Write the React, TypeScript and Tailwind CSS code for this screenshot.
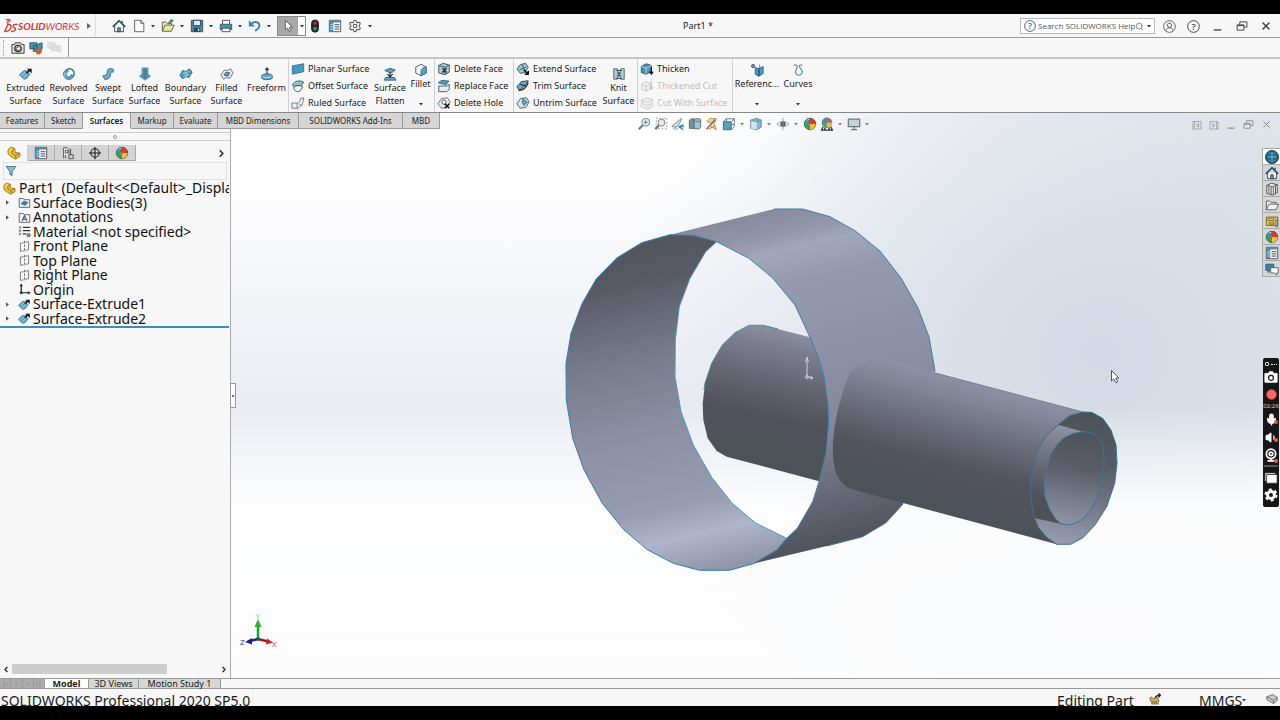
import React from 'react';
import { ChevronLeft, ChevronRight, Mic, Search, Settings, Volume1, Webcam, X } from 'lucide-react';

interface IconProps {
  className?: string;
  children?: React.ReactNode;
}

const Svg: React.FC<IconProps> = ({ className = 'w-[14px] h-[14px]', children }) => (
  <svg viewBox="0 0 16 16" className={`${className} shrink-0`} fill="none" stroke="#3d4a54" strokeWidth="1" strokeLinejoin="round" aria-hidden="true">
    {children}
  </svg>
);

const Caret: React.FC<{ className?: string }> = ({ className = '' }) => (
  <svg viewBox="0 0 4 3" className={`w-1 h-[3px] shrink-0 ${className}`} aria-hidden="true">
    <path d="M0 0h4L2 2.6z" fill="#333" />
  </svg>
);

const HelpMark: React.FC<{ className: string; ring: string }> = ({ className, ring }) => (
  <svg viewBox="0 0 16 16" className={`${className} shrink-0`} aria-hidden="true">
    <circle cx="8" cy="8" r="7.2" fill="#fafafa" stroke={ring} strokeWidth="1.2" />
    <text x="8" y="12" textAnchor="middle" fontSize="11.5" fontWeight="600" fill={ring} fontFamily="Open Sans, sans-serif">?</text>
  </svg>
);

const icons: Record<string, React.ReactNode> = {
  extruded: (
    <>
      <path d="M.5 9 5 4.500l3-.5 4.500 4-3.500 5-3 1-2-1.500z" fill="#5fa3c4" stroke="#4a7f99" />
      <path d="M3 10 7 5.500M5.500 12 10 7.500" stroke="#b5dbea" />
      <path d="m8.500 7 4-4" stroke="#1a1a1a" strokeWidth="2" />
      <path d="M9 2h5.500v5.500z" fill="#1a1a1a" stroke="none" />
    </>
  ),
  revolved: (
    <>
      <path d="M6 2.500A6 6 0 1 0 13.500 10l-3-1.200A3 3 0 1 1 7 5.500z" fill="#5fa3c4" stroke="#31708f" />
      <path d="M6 2.500c5-2 9 2 7.500 7.500" stroke="#31708f" strokeWidth="1.600" />
      <path d="M4 6 2.500 9.500 5 12.500" stroke="#b4dbeb" />
    </>
  ),
  swept: (
    <path d="M14 2.500c-3-2-7-.5-7 3 0 3-1 4-5 4.500l2.500 4.500C9 14 11 11.500 11 8c0-2 1-2.500 3-2z" fill="#6aa9c8" stroke="#31708f" />
  ),
  lofted: (
    <>
      <path d="M4.500 1h7v7l3 2.500L8 15l-6.500-4.500L4.500 8z" fill="#4e8fae" stroke="#78aac0" />
      <path d="M8 1.500V14" stroke="#3a7390" />
    </>
  ),
  boundary: (
    <>
      <path d="M1 9.500 4 4l4 1 4-3 3 4-3.500 6-3.500-1-4 2.500z" fill="#4e92b6" stroke="#31708f" />
      <path d="m4 8 8-3M5 11l7-3M7 5l2 6" stroke="#b4dbeb" />
    </>
  ),
  filled: (
    <>
      <path d="M1 9 5 3.500 9 4l3-2 3 5-4 6-4-1-3 2z" fill="#e9eef0" stroke="#5d6870" />
      <path d="m4.500 9 2.500-3 4 .5-2 4z" fill="#5fa3c4" stroke="#3d4a54" />
    </>
  ),
  freeform: (
    <>
      <path d="M2 10c1-3 11-3 12 0v3c-2 2-10 2-12 0z" fill="#5fa3c4" stroke="#31708f" />
      <path d="M8 1v7M6 3.500 8 1l2 2.500" stroke="#333" strokeWidth="1.300" />
      <path d="M3 11c2 1.500 8 1.500 10 0" stroke="#d5ecf5" />
    </>
  ),
  planar: <path d="M1.500 4.500 14.500 2v9L1.500 14z" fill="#4a97bf" stroke="#2f6f92" />,
  offset: (
    <>
      <path d="M1.500 7c2-5 9-6 13-3.500L11 8.500C8 7 5 7 4 9z" fill="#8cc3d8" stroke="#3d4a54" />
      <path d="M3 10c2-3 7-3 10.500-1L10 14c-3 1-6 0-7-4z" fill="#f5f5f5" stroke="#3d4a54" />
    </>
  ),
  ruled: (
    <>
      <path d="M1 8h6v6H1zM7 14c4-1 7-4 7.500-12l-4 1c0 4-1 5-3.500 5" fill="#edf0f1" stroke="#6a757c" />
      <path d="M9.500 9.500 13 11" stroke="#6a757c" />
    </>
  ),
  flatten: (
    <>
      <path d="M2 4 8 1.500l6 2L9 7z" fill="#5fa3c4" stroke="#2c5f7a" />
      <path d="M3 12h10l2 3H1z" fill="#5fa3c4" stroke="#2c5f7a" />
      <path d="M8 6v5M5 8l3 3.500L11 8" stroke="#222" strokeWidth="1.300" />
    </>
  ),
  fillet: (
    <>
      <path d="M2 4.500 8 1.500l6 3v7L8 14.500l-6-3z" fill="#f3f5f6" stroke="#4a545b" />
      <path d="M8 14.500V9.500c0-2.500 2-4.500 6-5v7z" fill="#5fa3c4" stroke="#31708f" />
    </>
  ),
  deleteFace: (
    <>
      <path d="M2 4 7 1.500l7 2v8l-5 3-7-2z" fill="#a7ccdc" stroke="#3d4a54" />
      <path d="M2 4l7 2 5-2.500M9 6v8.500" />
      <path d="m6 7 5 5m0-5-5 5" stroke="#222" strokeWidth="1.400" />
    </>
  ),
  replaceFace: (
    <>
      <path d="M1.500 4.500c3-4 7-3 12-2l-3 4c-3-1-5-1-9-2z" fill="#4e9ebf" stroke="#2c5f7a" />
      <path d="M2 8h10l2-2v6l-3 2.500H2z" fill="#e8edf0" stroke="#3d4a54" />
    </>
  ),
  deleteHole: (
    <>
      <path d="M1 9 5 3l7-1 3 5-4 6-6 1z" fill="#e8edf0" stroke="#5d6870" />
      <circle cx="8" cy="7" r="2.500" fill="#fff" />
      <path d="m9 9 5 5m0-5-5 5" stroke="#111" strokeWidth="1.700" />
    </>
  ),
  extend: (
    <>
      <path d="M1 8 5 3l6-1.500L14 6l-4 6-5 1z" fill="#9cc5d6" stroke="#3d4a54" />
      <path d="m4 9 7-3M7 3l3 7" />
      <path d="m9 9 5 5m0-4v4h-4" stroke="#111" strokeWidth="1.700" />
    </>
  ),
  trim: (
    <>
      <path d="M1 9 6 3l8-1-3 5-7 6z" fill="#6aa9c8" stroke="#253640" />
      <path d="M3 13c5 0 9-3 11-9M5 6l6 2" stroke="#222" strokeWidth="1.300" />
    </>
  ),
  untrim: (
    <>
      <path d="M1 9 5 3l7-1 3 5-4 6-6 1z" fill="#d8e6ec" stroke="#46545d" />
      <path d="m8 3 5 4-4 4-2-4z" fill="#5fa3c4" stroke="#31708f" />
    </>
  ),
  knit: (
    <>
      <path d="M2 2h4l1.500 6L6 14H2zM14 2h-4L8.500 8l1.500 6h4z" fill="#a7ccdc" stroke="#4a6472" />
      <path d="M5 4h6M6 7h4M6 10h4M5 13h6" stroke="#333" />
    </>
  ),
  thicken: (
    <>
      <path d="M1.500 5 7 2l6 2v7l-6 3-5.500-2z" fill="#4e92b6" stroke="#26536b" />
      <path d="M1.500 5 7 7l6-3M7 7v7" stroke="#bfe0ec" />
      <path d="M13 6v7m-2-2 2 3 2-3" stroke="#111" strokeWidth="1.400" />
    </>
  ),
  thickenedCut: (
    <>
      <path d="M2 6 7 3l5 2v6l-5 3-5-2zM2 6l5 2 5-3M7 8v6" fill="#eee" stroke="#c5c5c5" />
      <path d="M13 2v10m-2-3 2 3 2-3" stroke="#bbb" />
    </>
  ),
  cutWith: (
    <path d="m1.500 5 6-3 7 2-6 3zM1.500 5v3l7 3 6-3V4M1.500 9v3l7 3 6-3V9" fill="#eee" stroke="#c5c5c5" />
  ),
  reference: (
    <>
      <path d="M6 5l4 1.500V15l-4-2zM10 6.500 15 4v8l-5 3z" fill="#4e9ebf" stroke="#2c5f7a" />
      <circle cx="3.500" cy="3.500" r="1.800" fill="#5fa3c4" />
      <path d="M11 2v13" strokeDasharray="2 1" />
    </>
  ),
  curves: <path d="M3 2.500c5-1 5 2 3 5s0 7 3.500 6.500S14 10 11 6.500 9.500 2 13 2.500" stroke="#4a87a0" strokeWidth="1.200" />,
  home: (
    <>
      <path d="M3 8v6.500h10V8" fill="#fff" stroke="#333" />
      <path d="M1 9 8 2l7 7" stroke="#22536b" strokeWidth="2" />
      <path d="M6.500 14.500V10h3v4.500z" fill="#4e92b6" />
      <path d="M11.500 5V2" strokeWidth="1.500" />
    </>
  ),
  newDoc: <path d="M3 1.500h7L13.500 5v9.500H3zM10 1.500V5h3.500" fill="#fff" stroke="#555" />,
  open: (
    <>
      <path d="M1.500 14V3.500h4L7 5h5v2" fill="#f5edb8" stroke="#555" />
      <path d="m1.500 14 3-7H15l-3 7z" fill="#e9e8a4" stroke="#555" />
      <path d="M9 6c0-3 1-4 4-4m-2-1.500L13.500 2 11 4" stroke="#2f8f3f" strokeWidth="1.500" />
    </>
  ),
  save: (
    <>
      <path d="M1.500 1.500h13v13h-13z" fill="#4d86a3" stroke="#2a4654" />
      <path d="M4 1.500h8v6H4z" fill="#dceef4" stroke="#2a4654" />
      <path d="M4.500 10h7v4.500h-7z" fill="#2a4654" stroke="none" />
      <path d="M9 11h1.500v2.500H9z" fill="#fff" stroke="none" />
    </>
  ),
  print: (
    <>
      <path d="M4 6V1.500h8V6" fill="#fff" stroke="#444" />
      <path d="M1.500 6h13v6h-13z" fill="#4d92b5" stroke="#2a5266" />
      <path d="M3.500 10.500h9v4h-9z" fill="#fff" stroke="#444" />
    </>
  ),
  undo: (
    <>
      <path d="M3.500 5.500C8 2 13 3.500 13 7.500c0 3-2 4.500-5 6" stroke="#3e86ab" strokeWidth="2.200" />
      <path d="M1 1.500v7h7z" fill="#3e86ab" stroke="none" />
    </>
  ),
  pointer: <path d="M5 1.500v11l2.500-2.300 2 4 2-1-2-3.800H13z" fill="#fff" stroke="#555" />,
  traffic: (
    <>
      <rect x="4" y="1" width="8" height="14" rx="4" fill="#222" stroke="#222" />
      <circle cx="8" cy="4.800" r="2" fill="#c03030" stroke="none" />
      <circle cx="8" cy="11" r="2.200" fill="#2c9c46" stroke="none" />
    </>
  ),
  options: (
    <>
      <path d="M1.500 1.500h13v13h-13z" fill="#fff" stroke="#3b4c56" />
      <path d="M2 2h12v2H2zM2 2h4v12H2z" fill="#4d8dad" stroke="none" />
      <path d="M3 6.500h2M3 9h2M3 11.500h2" stroke="#fff" />
      <path d="M7.500 6.500H13M7.500 9H13M7.500 11.500H13" stroke="#333" />
    </>
  ),
  snap: (
    <>
      <path d="M1 4h3l1-2h6l1 2h3v10H1z" fill="#ddd" stroke="#333" />
      <circle cx="8" cy="8.500" r="3.600" fill="#fff" stroke="#333" strokeWidth="1.500" />
      <path d="M9.500 7.500a2 2 0 1 0 0 2.500" stroke="#333" />
    </>
  ),
  record: (
    <>
      <path d="M1 2h8v7H1zM5 5h9v7H5z" fill="#4d92b5" stroke="#29566d" />
      <path d="m9 4 6-2v7" fill="#4d92b5" stroke="#29566d" />
      <circle cx="11" cy="12" r="3.300" fill="#d9592a" stroke="none" />
    </>
  ),
  recordOff: <path d="M1 2h8v6H1zM5 5h7v6H5zM12 7l3-2v8l-3-2" fill="#e6e6e6" stroke="#d0d0d0" />,
  part: (
    <>
      <path d="M1 6.500C1 3.500 3 1.500 5.500 1.500L9 3v4.500l5.500.5.500 3.500-5 3.500L4.500 12C2.500 11 1 9 1 6.500z" fill="#f0c33c" stroke="#8a6d1a" />
      <path d="M9 3 6 5v4l4 2 4.800-3M10 11v3.500" stroke="#8a6d1a" />
      <path d="M3 6c.5-1.500 1.500-2.500 3-2.500" stroke="#fff1b8" />
    </>
  ),
  config: (
    <>
      <path d="M3 14V2h4l2 2v5" fill="#f3f3f3" stroke="#444" />
      <path d="M5 5h3v3H5zM9 10h5v4.500H9zM11 3v7M5 10v4" stroke="#444" />
    </>
  ),
  dimx: (
    <>
      <circle cx="8" cy="8" r="4.800" stroke="#222" strokeWidth="1.300" />
      <path d="M8 1v14M1 8h14" stroke="#222" strokeWidth="1.300" />
    </>
  ),
  appearance: (
    <>
      <circle cx="8" cy="8" r="6.500" fill="#ddd" stroke="#333" />
      <path d="M8 8 2 5.500A6.500 6.500 0 0 1 8 1.500z" fill="#2f7dc4" stroke="none" />
      <path d="M8 8V1.500A6.500 6.500 0 0 1 14.500 8z" fill="#d83a30" stroke="none" />
      <path d="M8 8h6.500A6.500 6.500 0 0 1 8 14.500z" fill="#e9c63b" stroke="none" />
      <path d="M8 8v6.500A6.500 6.500 0 0 1 2 5.500z" fill="#3d9c55" stroke="none" />
      <path d="M4 4.500a5 5 0 0 1 3-1.800" stroke="#fff" />
    </>
  ),
  bodies: (
    <>
      <path d="M1.500 14V3h5l1 1.500h7V14z" fill="#e3eef3" stroke="#555" />
      <path d="m4 9.500 3-3 5 1.500-3 3.500z" fill="#3d86aa" stroke="#2c5f7a" />
    </>
  ),
  annotations: (
    <>
      <path d="M1.500 14V3h5l1 1.500h7V14z" fill="#eef2f4" stroke="#555" />
      <path d="M5 12.500 8 5.500l3 7M6 10h4" stroke="#456" strokeWidth="1.300" />
    </>
  ),
  material: (
    <>
      <path d="M6 3h9M6 7h9M6 11h4" stroke="#333" strokeWidth="1.500" />
      <path d="M1.500 2h2v2h-2zM1.500 6h2v2h-2zM1.500 10h2v2h-2z" fill="#c9b45c" stroke="#888" />
      <circle cx="13" cy="12.500" r="2" fill="#999" />
    </>
  ),
  plane: (
    <>
      <path d="M3 4 13 2v10L3 14z" fill="#f7f7f7" stroke="#666" />
      <path d="M8 1.500v13" stroke="#f7f7f7" strokeWidth="2" />
      <path d="M8 1v14" stroke="#555" strokeDasharray="3 1.500" />
    </>
  ),
  origin: (
    <>
      <path d="M4 2.500V12h10" stroke="#222" strokeWidth="1.500" />
      <path d="M4 .5 2 4h4zM15.500 12 12 10v4z" fill="#222" stroke="none" />
      <circle cx="4" cy="12" r="1.500" fill="#222" />
    </>
  ),
  filter: <path d="M1.500 2h13L9.500 8.500V14l-3-1.500v-4z" fill="#8bc0d6" stroke="#2d5c72" />,
  zoomFit: (
    <>
      <circle cx="10" cy="6" r="4.500" fill="#dcebf3" stroke="#6b777f" />
      <path d="M6.500 9.500 2 14" stroke="#6b777f" strokeWidth="2.400" />
      <path d="M8 6h4M10 4v4" stroke="#2f7db0" />
    </>
  ),
  zoomArea: (
    <>
      <path d="M2.500 1.500h12v12h-12z" strokeDasharray="2 2" stroke="#889" />
      <circle cx="8.500" cy="6.500" r="4" fill="#dcebf3" stroke="#6b777f" />
      <path d="m5.500 9.500-4 4.500" stroke="#6b777f" strokeWidth="2.400" />
    </>
  ),
  prevView: (
    <>
      <path d="M1 10.500 12 1.500l-1 4-5 6.500z" fill="#d5dce0" stroke="#7a868d" />
      <path d="M2 12c2 2.500 4 2.500 6 1" stroke="#7a868d" />
      <path d="M14.500 8.500 9 11l5 3.500M9 11h6" stroke="#3384b5" strokeWidth="1.400" />
    </>
  ),
  section: (
    <>
      <path d="M1.500 4 4 2h3v11H1.500z" fill="#7f8d96" stroke="#5a686f" />
      <path d="M7 3c2-2 7-1 7.500 0v9c-1 2-5 2-7.500 1z" fill="#9dc4d6" stroke="#5a686f" />
      <path d="M7 4c2 1.500 5 1.500 7.500 0" stroke="#5a686f" />
    </>
  ),
  sketchView: (
    <>
      <path d="m2 5 4-3.500 7 .5-2 4-5 1z" fill="#f0d08c" stroke="#b58b3c" />
      <path d="M1.500 14 12 3" stroke="#778" strokeWidth="2" />
      <path d="m5 9 8 5.500M10 7l3 7.500M4 14l7-4" stroke="#d4902c" strokeWidth="1.300" />
    </>
  ),
  orient: (
    <>
      <path d="M1.500 5.500h9v9h-9z" fill="#5b9fc0" stroke="#33617a" />
      <path d="M1.500 5.500 5 2h9v9l-3.500 3.500M10.500 5.500 14 2M5 2v3.500M10.500 8.500H14" stroke="#4f6f80" />
    </>
  ),
  display: (
    <>
      <path d="m2 3.500 7-2 5 2v8l-5 3-7-1.500z" fill="#7fb6d0" stroke="#6b8795" />
      <path d="M2.500 4v9L9 14V5.500z" fill="#cfe4ee" stroke="none" />
      <path d="m2 3.500 7 2 5-2" stroke="#6b8795" />
    </>
  ),
  eye: (
    <>
      <path d="M1 8c4-4 10-4 14 0-4 4-10 4-14 0z" fill="#eee" stroke="#999" />
      <circle cx="8" cy="8" r="3" fill="#555" stroke="none" />
      <path d="M8 1v14" stroke="#999" />
    </>
  ),
  scene: (
    <>
      <circle cx="8" cy="6.500" r="5.500" fill="#d95a48" stroke="#777" />
      <path d="M8 6.500V1a5.500 5.500 0 0 0-5.500 5.500z" fill="#3f8fca" stroke="none" />
      <path d="M8 6.500v5.500a5.500 5.500 0 0 1-5.500-5.500z" fill="#52a75e" stroke="none" />
      <path d="M8 6.500h5.500A5.500 5.500 0 0 1 8 12z" fill="#e5c54a" stroke="none" />
      <path d="M2 15 3.500 11M14 15l-1.500-4M1 15h14M5.500 15V12M10.500 15V12" stroke="#333" strokeWidth="1.600" />
    </>
  ),
  monitor: (
    <>
      <path d="M1.500 2.500h13v8.500h-13z" fill="#cbd2d6" stroke="#6b777f" strokeWidth="1.400" />
      <path d="M8 11v3M4.500 14.300h7" stroke="#6b777f" strokeWidth="1.400" />
    </>
  ),
  paneLeft: <path d="M1.500 2.500h13v12h-13zM4 2.500v12M10.500 5.500v6L7 8.500z" stroke="#888" />,
  paneRight: <path d="M1.500 2.500h13v12h-13zM12 2.500v12M6 5.500v6l3.500-3z" stroke="#888" />,
  minimize: <path d="M2.500 13h11" stroke="currentColor" strokeWidth="1.800" />,
  restore: <path d="M1.500 6.500h9v7h-9zM5 6V2.500h9.500v7H11M1.500 7.500h9" stroke="currentColor" strokeWidth="1.200" />,
  globe: (
    <>
      <circle cx="8" cy="8" r="7.500" fill="#1f6389" stroke="#173f55" />
      <path d="M3 8h10M8 3v10" stroke="#8fc5dc" />
      <path d="M4 4.500c2-2 6-2 8 0M4 11.500c2 2 6 2 8 0" stroke="#5f9dba" />
    </>
  ),
  library: (
    <>
      <path d="M2 4 7 1.500 14 3v9l-5 3-7-2z" fill="#eee" stroke="#444" />
      <path d="M4.500 5v8M7 6v8.500M9.500 6v8M12 5v8M2 4l7 1.500L14 3" stroke="#444" />
    </>
  ),
  folder: (
    <path d="M1.500 13.500v-10h4L7 5h5.500v2M1.500 13.500 4.500 7h11l-3 6.500z" fill="#f1f1f1" stroke="#555" />
  ),
  palette: (
    <>
      <path d="M1.500 3.500h13v9.500h-13z" fill="#e8c651" stroke="#6e5713" />
      <path d="M3.500 5.500h7v2h-7zM5 10h5v1.500H5z" fill="#fff" stroke="#6e5713" />
      <path d="M12.500 7v7.500h2V7z" fill="#ddd" stroke="#555" />
    </>
  ),
  forum: (
    <>
      <path d="M1 2.500h9v7H6L3.500 12V9.500H1z" fill="#3683ab" stroke="#235a78" />
      <path d="M6.500 6.500H15v6h-1.500V15L11 12.500H6.500z" fill="#fff" stroke="#555" />
    </>
  ),
  rebuild: (
    <>
      <path d="m1 7 2-2 3 3 4-3 3 4v3H3z" fill="#dba945" stroke="#65531f" />
      <path d="M3 14.500h10M4 12v2M7 12v2M10 12v2" stroke="#555" strokeWidth="1.300" />
      <path d="M8 7c1-4 3-4 5-4m0-2.500V6L16 3z" fill="#111" stroke="#111" />
    </>
  ),
  tag: (
    <>
      <path d="m1 5 8-3 6 4v4l-5 4-9-5z" fill="#c9cccf" stroke="#555" />
      <path d="m1 5 9 5 5-4M10 10v4" stroke="#555" />
    </>
  ),
};

const Icon: React.FC<{ name: string; className?: string }> = ({ name, className }) => <Svg className={className}>{icons[name]}</Svg>;

interface BigToolProps {
  icon: string;
  label: string;
  width: string;
  menu?: boolean;
}

const BigTool: React.FC<BigToolProps> = ({ icon, label, width, menu }) => (
  <button className={`${width} ${menu ? 'pt-1' : 'pt-2'} h-full shrink-0 flex flex-col items-center text-[9px] leading-[13px]`}>
    <Icon name={icon} />
    <span className="whitespace-pre">{label}</span>
    {menu && <Caret className="mt-auto mb-[6px]" />}
  </button>
);

interface SmallTool {
  icon: string;
  label: string;
  disabled?: boolean;
}

const ToolColumn: React.FC<{ tools: SmallTool[]; width: string }> = ({ tools, width }) => (
  <div className={`${width} shrink-0 h-full pt-[1px] flex flex-col border-l border-[#d0d0d0] pl-[2px]`}>
    {tools.map(t => (
      <button key={t.label} disabled={t.disabled} className={`flex items-center gap-[3px] h-[17px] text-[9px] whitespace-nowrap ${t.disabled ? 'text-[#bdbdbd]' : ''}`}>
        <Icon name={t.icon} /> {t.label}
      </button>
    ))}
  </div>
);

const createTools: BigToolProps[] = [
  { icon: 'extruded', label: 'Extruded\nSurface', width: 'w-[43px]' },
  { icon: 'revolved', label: 'Revolved\nSurface', width: 'w-[43px]' },
  { icon: 'swept', label: 'Swept\nSurface', width: 'w-[36px]' },
  { icon: 'lofted', label: 'Lofted\nSurface', width: 'w-[37px]' },
  { icon: 'boundary', label: 'Boundary\nSurface', width: 'w-[45px]' },
  { icon: 'filled', label: 'Filled\nSurface', width: 'w-[37px]' },
  { icon: 'freeform', label: 'Freeform', width: 'w-[43px]' },
];

const commandTabs = [
  { label: 'Features', width: 'w-[45px]' },
  { label: 'Sketch', width: 'w-[38px]' },
  { label: 'Surfaces', width: 'w-[48px]' },
  { label: 'Markup', width: 'w-[43px]' },
  { label: 'Evaluate', width: 'w-[44px]' },
  { label: 'MBD Dimensions', width: 'w-[81px]' },
  { label: 'SOLIDWORKS Add-Ins', width: 'w-[104px]' },
  { label: 'MBD', width: 'w-[37px]' },
];

const treeItems = [
  { icon: 'bodies', label: 'Surface Bodies(3)', expandable: true },
  { icon: 'annotations', label: 'Annotations', expandable: true },
  { icon: 'material', label: 'Material <not specified>' },
  { icon: 'plane', label: 'Front Plane' },
  { icon: 'plane', label: 'Top Plane' },
  { icon: 'plane', label: 'Right Plane' },
  { icon: 'origin', label: 'Origin' },
  { icon: 'extruded', label: 'Surface-Extrude1', expandable: true },
  { icon: 'extruded', label: 'Surface-Extrude2', expandable: true },
];

const quickTools = [
  { icon: 'home', label: 'Home', menu: false },
  { icon: 'newDoc', label: 'New', menu: true },
  { icon: 'open', label: 'Open', menu: true },
  { icon: 'save', label: 'Save', menu: true },
  { icon: 'print', label: 'Print', menu: true },
  { icon: 'undo', label: 'Undo', menu: true },
];

const TitleBar = () => (
  <header className="h-[23px] shrink-0 flex items-center border-b border-[#999] relative">
    <div className="w-[96px] h-full shrink-0 flex items-center border-r border-[#ddd] pl-[3px]">
      <svg viewBox="0 0 15 16" className="w-[15px] h-4 shrink-0" fill="none" stroke="#d6332c" strokeWidth="1.3" aria-label="DS">
        <path d="M3 2c2-.8 4.500-.6 4 .4S5 4 3.500 4.500M1.500 13.500 5 6.500M1.500 13.500c4 .3 6.500-2 6.500-4.500 0-2-1.500-3-4-3M14.500 6.500c-2.500-.4-4.500.2-4.500 1.700s3 1.300 2.600 3-2 2.300-4.600 2.300" />
      </svg>
      <span className="text-[10px] italic text-[#d6332c] font-['Lato','Noto_Sans',sans-serif]"><b>SOLID</b>WORKS</span>
      <svg viewBox="0 0 4 6" className="w-1 h-[6px] ml-auto mr-1" aria-hidden="true"><path d="M0 0v6l4-3z" fill="#666" /></svg>
    </div>
    <nav className="flex items-center h-full pl-4" aria-label="Quick access">
      {quickTools.map(t => (
        <button key={t.label} aria-label={t.label} className={`${t.menu ? 'w-[29px]' : 'w-5'} flex items-center justify-between pr-[6px]`}>
          <Icon name={t.icon} />
          {t.menu && <Caret />}
        </button>
      ))}
      <button aria-label="Select" className="w-[29px] h-5 flex items-center border border-[#888] bg-white">
        <span className="w-5 h-full flex items-center justify-center bg-[#a8a8a8]"><Icon name="pointer" /></span>
        <Caret className="ml-[2px]" />
      </button>
      <button aria-label="Rebuild" className="ml-[2px]"><Icon name="traffic" /></button>
      <button aria-label="File properties" className="ml-[6px]"><Icon name="options" /></button>
      <button aria-label="Options" className="ml-[6px] flex items-center gap-[6px] text-[#555]">
        <Settings className="w-[14px] h-[14px]" strokeWidth={1.8} />
        <Caret />
      </button>
    </nav>
    <h1 className="absolute left-1/2 ml-[43px] text-[9px]">Part1 *</h1>
    <div className="ml-auto flex items-center text-[#333]">
      <div className="w-[135px] h-4 flex items-center bg-white border border-[#bbb] px-[3px]">
        <HelpMark className="w-3 h-3" ring="#3b5f73" />
        <input
          aria-label="Search SOLIDWORKS Help"
          placeholder="Search SOLIDWORKS Help"
          className="flex-1 min-w-0 ml-[2px] text-[8px] font-['Open_Sans',sans-serif] outline-none placeholder:text-[#555]"
        />
        <Search className="w-[9px] h-[9px] shrink-0 text-[#666]" />
        <Caret className="ml-[3px]" />
      </div>
      <button aria-label="Account" className="ml-2">
        <Svg className="w-[13px] h-[13px]">
          <circle cx="8" cy="8" r="7.200" stroke="#444" /><circle cx="8" cy="6.500" r="2.700" stroke="#444" /><path d="M3.500 13c1-4.500 8-4.500 9 0" stroke="#444" />
        </Svg>
      </button>
      <button aria-label="Help" className="ml-[11px]"><HelpMark className="w-[13px] h-[13px]" ring="#444" /></button>
      <button aria-label="Minimize" className="ml-[12px]"><Icon name="minimize" className="w-[11px] h-[11px]" /></button>
      <button aria-label="Restore" className="ml-[13px]"><Icon name="restore" className="w-[12px] h-[12px]" /></button>
      <button aria-label="Close" className="ml-3 mr-[8px]"><X className="w-[12px] h-[12px]" strokeWidth={2.6} /></button>
    </div>
  </header>
);

const Ribbon = () => (
  <section className="h-[54px] shrink-0 flex border-b border-[#888] pl-1" aria-label="Surfaces tools">
    {createTools.map(t => <BigTool key={t.label} {...t} />)}
    <ToolColumn
      width="w-[85px]"
      tools={[
        { icon: 'planar', label: 'Planar Surface' },
        { icon: 'offset', label: 'Offset Surface' },
        { icon: 'ruled', label: 'Ruled Surface' },
      ]}
    />
    <BigTool icon="flatten" label={'Surface\nFlatten'} width="w-[34px]" />
    <BigTool icon="fillet" label="Fillet" width="w-[27px]" menu />
    <ToolColumn
      width="w-[79px]"
      tools={[
        { icon: 'deleteFace', label: 'Delete Face' },
        { icon: 'replaceFace', label: 'Replace Face' },
        { icon: 'deleteHole', label: 'Delete Hole' },
      ]}
    />
    <ToolColumn
      width="w-[87px]"
      tools={[
        { icon: 'extend', label: 'Extend Surface' },
        { icon: 'trim', label: 'Trim Surface' },
        { icon: 'untrim', label: 'Untrim Surface' },
      ]}
    />
    <BigTool icon="knit" label={'Knit\nSurface'} width="w-[37px]" />
    <ToolColumn
      width="w-[95px]"
      tools={[
        { icon: 'thicken', label: 'Thicken' },
        { icon: 'thickenedCut', label: 'Thickened Cut', disabled: true },
        { icon: 'cutWith', label: 'Cut With Surface', disabled: true },
      ]}
    />
    <div className="flex border-l border-[#d0d0d0]">
      <BigTool icon="reference" label="Referenc..." width="w-[48px]" menu />
      <BigTool icon="curves" label="Curves" width="w-[34px]" menu />
    </div>
  </section>
);

const panelTabs = ['part', 'options', 'config', 'dimx', 'appearance'];

const FeatureManager = () => (
  <aside className="w-[231px] shrink-0 flex flex-col bg-[#f7f7f7] border-r border-[#aaa]">
    <div className="h-[9px] mt-[3px] mb-1 shrink-0 border-y border-[#ccc] flex items-center justify-center">
      <span className="w-1 h-1 rounded-full border border-[#999]" />
    </div>
    <div className="flex h-4 shrink-0 items-stretch pl-[1px]">
      {panelTabs.map((name, i) => (
        <button key={name} aria-label={name} className={`w-[27px] flex items-center justify-center border-r ${i === 0 ? 'bg-[#f7f7f7] border-[#ccc]' : 'bg-[#d3d3d3] border-[#aaa] border-b'}`}>
          <Icon name={name} />
        </button>
      ))}
      <button aria-label="More tabs" className="ml-auto mr-[3px] self-center"><ChevronRight className="w-[11px] h-[11px]" strokeWidth={3} /></button>
    </div>
    <label className="h-[18px] shrink-0 mt-[1px] mx-[3px] flex items-center border border-[#e0e0e0] pl-[1px]">
      <Icon name="filter" className="w-3 h-3" />
      <input aria-label="Filter tree" className="flex-1 min-w-0 text-[9px] outline-none" />
    </label>
    <div className="border-b-2 border-[#3b8cc0] text-[14px] text-[#111] h-[148px] shrink-0 grid auto-rows-fr overflow-hidden mr-[1px] pt-[1px]">
      <button className="flex items-center gap-[3px] pl-[3px] whitespace-pre leading-none">
        <Icon name="part" className="w-[13px] h-[13px]" />Part1  (Default&lt;&lt;Default&gt;_Displa
      </button>
      {treeItems.map(item => (
        <button key={item.label} className="flex items-center pl-[6px] whitespace-nowrap leading-none">
          <span className="w-3 shrink-0">
            {item.expandable && <svg viewBox="0 0 4 6" className="w-[3px] h-[5px]" aria-hidden="true"><path d="M0 0v6l4-3z" fill="#555" /></svg>}
          </span>
          <Icon name={item.icon} className="w-[13px] h-[13px] mr-[2px]" />
          {item.label}
        </button>
      ))}
    </div>
    <div className="mt-auto h-3 mb-[3px] shrink-0 flex items-center">
      <ChevronLeft className="w-3 h-[9px]" strokeWidth={3} />
      <div className="flex-1 h-[10px]"><div className="w-3/4 h-full bg-[#cdcdcd]" /></div>
      <ChevronRight className="w-3 h-[9px]" strokeWidth={3} />
    </div>
  </aside>
);

const frontRight = '786.7,538.3 797.3,528.3 812.7,501.7 819,481.7 826,453.3 828.7,423.3 828,403 824,376.7 818.3,356.7 810,337.3 795,305 772.7,278 749,258.3 716.7,241.7 693,235.3 670,234.7';
const frontLeft = '670,234.7 641.7,242.7 616.7,258 596,279.3 581.7,304.3 571,333.3 566,363.3 566.3,400 572.7,438.3 584,470 602.3,503.3 623.3,529.3 647.3,549.7 673.3,563.3 699.3,570.3 729.3,570.3 753.3,563.7 776.7,550 786.7,538.3';
const backLeft = '786.7,538.3 755,522.7 731.7,502.7 711.7,477.3 693.3,445 681,411.7 675,376.7 675.3,340 679.3,306.7 690,278.3 705.7,251.7 716.7,241.7';
const backRight = '774,209 802.7,209 830,216.7 855,230.7 880,251 901,278 918,308 929,337 935,371';
const tubeEnd = '1083,412 1091.7,412.3 1102.7,418.3 1111,430 1116,445 1117,463.3 1114.7,483.3 1106.7,506.7 1095,525 1083,537.7 1070.7,544.3 1056.7,544.3 1046.7,537.3 1038,526.7 1034,516.7 1030.7,496.7 1031,476.7 1036.7,451.7 1046.7,435 1059,424 1070,415.500';
const boreEnd = '1083,431.7 1091,432.5 1098,436.7 1102.5,446 1104,456.7 1104,468 1102,482 1095,503.3 1088,513.5 1080,521 1073,524 1066.7,525 1060,523 1055,518.3 1049,508 1045,496.7 1044,486 1045,476.7 1050.7,455 1056,446 1063.3,438.3 1073,433.5';

const Model = () => (
  <svg viewBox="231 129 1049 549" className="absolute inset-0 w-full h-full" fill="none" role="img" aria-label="Part1 model">
    <defs>
      <linearGradient id="outerRing" gradientUnits="userSpaceOnUse" x1="740" y1="214" x2="822" y2="555">
        <stop offset="0" stopColor="#86899c" /><stop offset=".07" stopColor="#9194a8" /><stop offset=".13" stopColor="#a2a6bb" />
        <stop offset=".22" stopColor="#969aaf" /><stop offset=".45" stopColor="#8e91a6" /><stop offset=".65" stopColor="#85889b" />
        <stop offset=".82" stopColor="#696c79" /><stop offset="1" stopColor="#4d5059" />
      </linearGradient>
      <linearGradient id="innerRing" gradientUnits="userSpaceOnUse" x1="625" y1="240" x2="700" y2="572">
        <stop offset="0" stopColor="#51555d" /><stop offset=".12" stopColor="#575a64" /><stop offset=".35" stopColor="#787b8b" />
        <stop offset=".55" stopColor="#8b8ea3" /><stop offset=".8" stopColor="#999db2" /><stop offset=".89" stopColor="#b1b5cb" /><stop offset="1" stopColor="#9296aa" />
      </linearGradient>
      <linearGradient id="backTube" gradientUnits="userSpaceOnUse" x1="780" y1="326" x2="752" y2="463">
        <stop offset="0" stopColor="#8f91a5" /><stop offset=".15" stopColor="#7c7e90" /><stop offset=".4" stopColor="#636671" />
        <stop offset=".65" stopColor="#50535b" /><stop offset="1" stopColor="#4d5158" />
      </linearGradient>
      <linearGradient id="frontTube" gradientUnits="userSpaceOnUse" x1="980" y1="380" x2="945" y2="514">
        <stop offset="0" stopColor="#8f91a8" /><stop offset=".15" stopColor="#84869a" /><stop offset=".38" stopColor="#6b6e7b" />
        <stop offset=".65" stopColor="#52555e" /><stop offset="1" stopColor="#4d5158" />
      </linearGradient>
      <linearGradient id="tubeInside" gradientUnits="userSpaceOnUse" x1="1090" y1="412" x2="1065" y2="545">
        <stop offset="0" stopColor="#4d5159" /><stop offset=".35" stopColor="#565a64" /><stop offset=".65" stopColor="#717584" /><stop offset="1" stopColor="#989cb2" />
      </linearGradient>
      <linearGradient id="innerTube" gradientUnits="userSpaceOnUse" x1="1064" y1="425" x2="1040" y2="522">
        <stop offset="0" stopColor="#8f91a7" /><stop offset=".4" stopColor="#6a6d7a" /><stop offset=".75" stopColor="#4f525b" /><stop offset="1" stopColor="#4d5158" />
      </linearGradient>
      <linearGradient id="bore" gradientUnits="userSpaceOnUse" x1="1080" y1="432" x2="1066" y2="525">
        <stop offset="0" stopColor="#4e525a" /><stop offset=".4" stopColor="#5c5f6a" /><stop offset="1" stopColor="#9194a6" />
      </linearGradient>
      <clipPath id="tubeClip"><polygon points={tubeEnd} /></clipPath>
    </defs>

    <polygon points={`${frontLeft} ${backLeft} 693,235.3`} fill="url(#innerRing)" />
    <polygon points="749.3,325.3 763.3,325.3 810,337.3 818.3,356.7 824,376.7 828,403 828.7,423.3 826,453.3 820,481.5 726.7,456.7 716.7,451 707.7,438.3 703.3,420 702.7,403.3 705,383.3 711.7,363.3 722.3,345 735,332.7" fill="url(#backTube)" />
    <polyline points="704,390 705,383.3 711.7,363.3 722.3,345 735,332.7 749.3,325.3 763.3,325.3 778,329" stroke="#3f8f97" />
    <polygon points={`670,234.7 ${backRight} 930,450 903,504 886,522.7 862.7,536.7 826.7,546 753.3,563.7 776.7,550 ${frontRight}`} fill="url(#outerRing)" />
    <polyline points={frontLeft} stroke="#347fae" />
    <polyline points={backLeft} stroke="#4b9ac4" />
    <polyline points={frontRight} stroke="#3a80ad" />
    <polyline points={backRight} stroke="#417fab" />
    <polyline points="903,504 886,522.7 862.7,536.7 826.7,546" stroke="#4d7291" />

    <path d="M868 361Q873 356 888 360L1083 412 1056.700 544.300 1030 537 850.700 489Q841 485 836 473 832 460 833 442 835 410 850 372 857 365 868 361z" fill="url(#frontTube)" />
    <path d="m935 373 148 39" stroke="#7c8399" />
    <polygon points={tubeEnd} fill="url(#tubeInside)" />
    <g clipPath="url(#tubeClip)">
      <path d="M1059 425 1083 431.700 1098 437 1066.700 525 1034 518 1028 518V425z" fill="url(#innerTube)" />
    </g>
    <polygon points={boreEnd} fill="url(#bore)" stroke="#3a7693" />
    <polygon points={tubeEnd} stroke="#3a738f" />

    <g stroke="#d0d0d4" strokeWidth="1">
      <path d="M807 377v-18m-1.500 3 1.500-5 1.500 5M807 377l6 1m-3-2 3 2-3 1.500" />
      <circle cx="807" cy="377" r="1.500" />
    </g>

    <path d="M258 639v-15" stroke="#1e9d2b" strokeWidth="2.500" /><path d="m254.500 627 3.500-8 3.500 8z" fill="#27b337" />
    <path d="m258 639 10 2.500" stroke="#9c1d1d" strokeWidth="2.500" /><path d="m267 638.500 6 4-7 2z" fill="#c42222" />
    <path d="m258 639-8 2" stroke="#1d1f94" strokeWidth="2.500" /><path d="m252 638-7 4 7 2.500z" fill="#1d1f94" />
    <circle cx="258" cy="639" r="1.800" fill="#1b5a5a" />
    <g fontFamily="Open Sans, sans-serif" fontSize="8">
      <text x="255.500" y="619" fill="#5fce66">Y</text>
      <text x="272" y="647" fill="#dd3b3b">X</text>
      <text x="240" y="645" fill="#2a2cb0">Z</text>
    </g>
    <path d="M1111.500 370.500v10.500l2.300-2.200 2 4 2-1-2-3.800h3z" fill="#fff" stroke="#444" strokeWidth=".9" />
  </svg>
);

const headsUp = [
  { icon: 'zoomFit', menu: false },
  { icon: 'zoomArea', menu: false },
  { icon: 'prevView', menu: false },
  { icon: 'section', menu: false },
  { icon: 'sketchView', menu: false },
  { icon: 'orient', menu: true },
  { icon: 'display', menu: true },
  { icon: 'eye', menu: true },
  { icon: 'appearance', menu: false },
  { icon: 'scene', menu: true },
  { icon: 'monitor', menu: true },
];

const taskPane = ['globe', 'home', 'library', 'folder', 'palette', 'appearance', 'options', 'forum'];

const RecDot = () => <span className="absolute right-0 bottom-[2px] w-1 h-1 rounded-full bg-[#e05a5a]" />;

const Recorder = () => (
  <div className="absolute right-[1px] top-[229px] w-4 h-[149px] rounded-[2px] bg-[#161616] text-white flex flex-col items-center pt-[3px]">
    <div className="flex items-center gap-[2px] h-[6px]">
      <span className="w-1 h-1 border border-[#ddd] rounded-[1px]" />
      <span className="w-[6px] border-t border-dotted border-white" />
    </div>
    <button aria-label="Screenshot" className="mt-[3px]">
      <Svg className="w-[14px] h-[14px]">
        <path d="M1 4h4l1-2h4l1 2h4v10H1z" fill="#fff" stroke="#fff" />
        <circle cx="8" cy="9" r="2.800" stroke="#161616" strokeWidth="1.400" />
      </Svg>
    </button>
    <button aria-label="Stop recording" className="mt-[5px] w-[11px] h-[11px] rounded-full border border-[#a33] bg-[#f26a6a]" />
    <span className="text-[6px] leading-[8px] mt-[2px] text-[#ccc]">02:26</span>
    <button aria-label="Microphone" className="relative mt-[3px]"><Mic className="w-[13px] h-[13px]" fill="#fff" strokeWidth={2.6} /><RecDot /></button>
    <button aria-label="Sound" className="relative mt-[5px]"><Volume1 className="w-[13px] h-[13px]" fill="#fff" /><RecDot /></button>
    <button aria-label="Webcam" className="relative mt-1 pb-[3px] border-b-2 border-[#555]"><Webcam className="w-[14px] h-[14px]" strokeWidth={3} /><RecDot /></button>
    <button aria-label="Windows" className="mt-[4px]">
      <Svg className="w-[14px] h-[14px]"><path d="M1 2h12v10H1z" fill="#fff" stroke="#161616" /><path d="M3 4h12v10H3z" fill="#fff" stroke="#333" /></Svg>
    </button>
    <button aria-label="Settings" className="mt-[3px]">
      <Svg className="w-[14px] h-[14px]">
        <circle cx="8" cy="8" r="4" stroke="#fff" strokeWidth="3.400" />
        <circle cx="8" cy="8" r="6.300" stroke="#fff" strokeWidth="2.400" strokeDasharray="3.3 3.3" />
      </Svg>
    </button>
  </div>
);

const Viewport = () => (
  <main className="relative flex-1 min-w-0">
    <Model />
    <div className="absolute -top-3 left-[406px] flex items-center gap-[3px]">
      {headsUp.map(t => (
        <button key={t.icon} aria-label={t.icon} className="flex items-center gap-[4px]">
          <Icon name={t.icon} />
          {t.menu && <Caret className="mr-[2px] opacity-60" />}
        </button>
      ))}
    </div>
    <div className="absolute -top-[10px] right-2 flex items-center gap-[7px] text-[#888]">
      <button aria-label="Collapse left"><Icon name="paneLeft" className="w-[10px] h-[10px]" /></button>
      <button aria-label="Collapse right"><Icon name="paneRight" className="w-[10px] h-[10px]" /></button>
      <button aria-label="Minimize document"><Icon name="minimize" className="w-[10px] h-[10px]" /></button>
      <button aria-label="Restore document"><Icon name="restore" className="w-[11px] h-[11px]" /></button>
      <button aria-label="Close document"><X className="w-[11px] h-[11px]" /></button>
    </div>
    <div className="absolute -left-[1px] top-[254px] w-[6px] h-[25px] bg-white border border-[#999] flex items-center justify-center">
      <span className="w-[2px] h-[2px] bg-[#777]" />
    </div>
    <div className="absolute right-0 top-[19px] w-[18px] flex flex-col border-t border-l border-[#aaa]">
      {taskPane.map((name, i) => (
        <button key={name} aria-label={name} className={`h-4 flex items-center justify-center border-b border-[#aaa] ${i === 0 ? 'bg-white' : 'bg-[#d6d6d6]'}`}>
          <Icon name={name} />
        </button>
      ))}
    </div>
    <Recorder />
  </main>
);

const BottomTabs = () => (
  <nav className="h-[11px] shrink-0 flex items-stretch border-y border-[#999] text-[9px] leading-[9px] whitespace-nowrap" aria-label="Model tabs">
    <div className="w-[45px] flex bg-[#aaa]">
      {['|‹', '‹', '›', '›|'].map(s => (
        <button key={s} aria-label={s} className="flex-1 border-r border-[#999] text-[7px] text-[#888]">{s}</button>
      ))}
    </div>
    <button className="w-[43px] bg-white font-bold">Model</button>
    <button className="w-[50px] bg-[#d6d6d6] border-l border-[#999]">3D Views</button>
    <button className="w-[83px] bg-[#d6d6d6] border-x border-[#999]">Motion Study 1</button>
  </nav>
);

const App = () => (
  <div className="h-screen flex flex-col bg-black py-[14px] font-['Noto_Sans','Open_Sans',sans-serif] text-[#1a1a1a]">
    <div className="flex-1 min-h-0 flex flex-col bg-[#f7f7f7] pt-[1px] overflow-hidden">
      <TitleBar />
      <div className="h-[21px] shrink-0 border-b-2 border-[#c6c6c6]">
        <div className="w-[69px] h-full border-r border-[#999] flex items-center gap-1 pl-[3px]">
          <span className="h-4 mr-[3px] border-l border-dotted border-[#999]" />
          <button aria-label="Screen capture"><Icon name="snap" /></button>
          <button aria-label="Record video"><Icon name="record" /></button>
          <button aria-label="Stop video" disabled><Icon name="recordOff" /></button>
        </div>
      </div>
      <Ribbon />
      <div className="flex-1 min-h-0 flex flex-col bg-[linear-gradient(to_bottom,#ffffff00_52%,#ffffffe6_70%,#ffffffc0_100%),radial-gradient(ellipse_38%_75%_at_86%_42%,#d3dae5_0%,#d3dae500_100%),radial-gradient(ellipse_40%_80%_at_100%_10%,#e3e7ec_0%,#e3e7ec00_100%),linear-gradient(to_bottom,#ffffff_10%,#eaecf3_53%,#f4f6f9_100%)]">
        <div className="h-4 shrink-0 flex">
          {commandTabs.map(t => (
            <button
              key={t.label}
              className={`${t.width} shrink-0 text-[8px] whitespace-nowrap border-r border-b border-[#999] ${t.label === 'Surfaces' ? 'bg-[#f7f7f7] border-b-[#f7f7f7] font-semibold' : 'bg-[#d5d5d5] text-[#222]'}`}
            >
              {t.label}
            </button>
          ))}
        </div>
        <div className="flex-1 min-h-0 flex">
          <FeatureManager />
          <Viewport />
        </div>
      </div>
      <BottomTabs />
      <footer className="h-[17px] shrink-0 flex overflow-hidden text-[14px] leading-6 pl-[1px]">
        <span>SOLIDWORKS Professional 2020 SP5.0</span>
        <span className="ml-auto w-[92px]">Editing Part</span>
        <Icon name="rebuild" className="w-3 h-3 mt-1" />
        <button className="ml-[38px] flex w-[67px] whitespace-nowrap">MMGS<Caret className="mt-[10px]" /></button>
        <Icon name="tag" className="w-3 h-3 mt-1 mr-[2px]" />
      </footer>
    </div>
  </div>
);

export default App;
